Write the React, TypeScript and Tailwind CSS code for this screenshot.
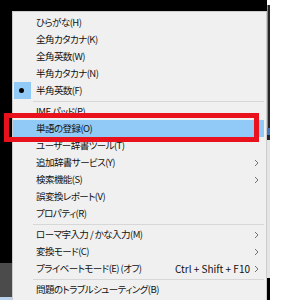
import React from 'react';

type Item =
  | { sep: true }
  | { label: string; sub?: boolean; shortcut?: string; checked?: boolean; active?: boolean; sep?: false };

const items: Item[] = [
  { label: 'ひらがな(H)' },
  { label: '全角カタカナ(K)' },
  { label: '全角英数(W)' },
  { label: '半角カタカナ(N)' },
  { label: '半角英数(F)', checked: true },
  { sep: true },
  { label: 'IME パッド(P)' },
  { label: '単語の登録(O)', active: true },
  { label: 'ユーザー辞書ツール(T)' },
  { label: '追加辞書サービス(Y)', sub: true },
  { label: '検索機能(S)', sub: true },
  { label: '誤変換レポート(V)' },
  { label: 'プロパティ(R)' },
  { sep: true },
  { label: 'ローマ字入力 / かな入力(M)', sub: true },
  { label: '変換モード(C)', sub: true },
  { label: 'プライベートモード(E) (オフ)', shortcut: 'Ctrl + Shift + F10', sub: true },
  { sep: true },
  { label: '問題のトラブルシューティング(B)' },
];

const Chevron = () => (
  <svg width="5" height="8" viewBox="0 0 5 8" className="shrink-0">
    <polyline points="1,1 4,4 1,7" fill="none" stroke="#707070" strokeWidth="1" />
  </svg>
);

export default function App() {
  return (
    <div
      className="relative flex w-[286px] h-[300px] overflow-hidden bg-black text-[10px] text-[#111] [font-feature-settings:'palt']"
      style={{ fontFamily: '"Noto Sans CJK JP", "Noto Sans", sans-serif' }}
    >
      {/* left edge of the desktop behind */}
      <div className="flex flex-col w-[12px] shrink-0">
        <div className="h-[263px] bg-black" />
        <div className="h-[34px] bg-[#4b4b4b]" />
        <div className="flex-1 bg-[#b9d3ec]" />
      </div>

      {/* the menu */}
      <div className="flex flex-col w-[255px] shrink-0 pt-[11px]">
        <div className="flex flex-col flex-1 bg-[#f0f0f0] border-t border-x border-[#cccccc] pt-[2px]">
          {items.map((it, i) =>
            it.sep ? (
              <div key={i} className="h-[4px] flex items-center pl-[20px] pr-[2px]">
                <div className="h-px w-full bg-[#d7d7d7]" />
              </div>
            ) : (
              <div
                key={i}
                className={`flex items-center h-[17px] pl-[1px] mr-[2px] leading-none ${it.active ? 'bg-[#91c9f7]' : ''}`}
              >
                <div className={`flex items-center justify-center w-[17px] h-[17px] shrink-0 ${it.checked ? 'bg-[#91c9f7]' : ''}`}>
                  {it.checked && <div className="w-[5px] h-[5px] rounded-full bg-black -ml-[2px]" />}
                </div>
                <span className="ml-[5px] pt-[1px] whitespace-nowrap text-[9.5px] tracking-[-0.55px]">{it.label}</span>
                <div className="flex-1" />
                {it.shortcut && <span className="whitespace-nowrap pt-[1px] mr-[4px]">{it.shortcut}</span>}
                <div className="w-[5px] mr-[5px] flex items-center">{it.sub && <Chevron />}</div>
              </div>
            )
          )}
        </div>
      </div>

      {/* right edge: window behind */}
      <div className="flex flex-col w-[3px] shrink-0">
        <div className="h-[5px] bg-white" />
        <div className="h-[123px] bg-[#262626] border-l border-[#8a8a8a]" />
        <div className="h-[7px] bg-[#3d78c4]" />
        <div className="h-[5px] bg-[#262626]" />
        <div className="h-[138px] bg-[#e4e4e4]" />
        <div className="flex-1 bg-black" />
      </div>
      <div className="w-[16px] shrink-0 bg-white" />

      {/* red annotation box */}
      <div className="absolute left-[4px] top-[113px] w-[255px] h-[29px] border-[5px] border-[#e8111c]" />
    </div>
  );
}
